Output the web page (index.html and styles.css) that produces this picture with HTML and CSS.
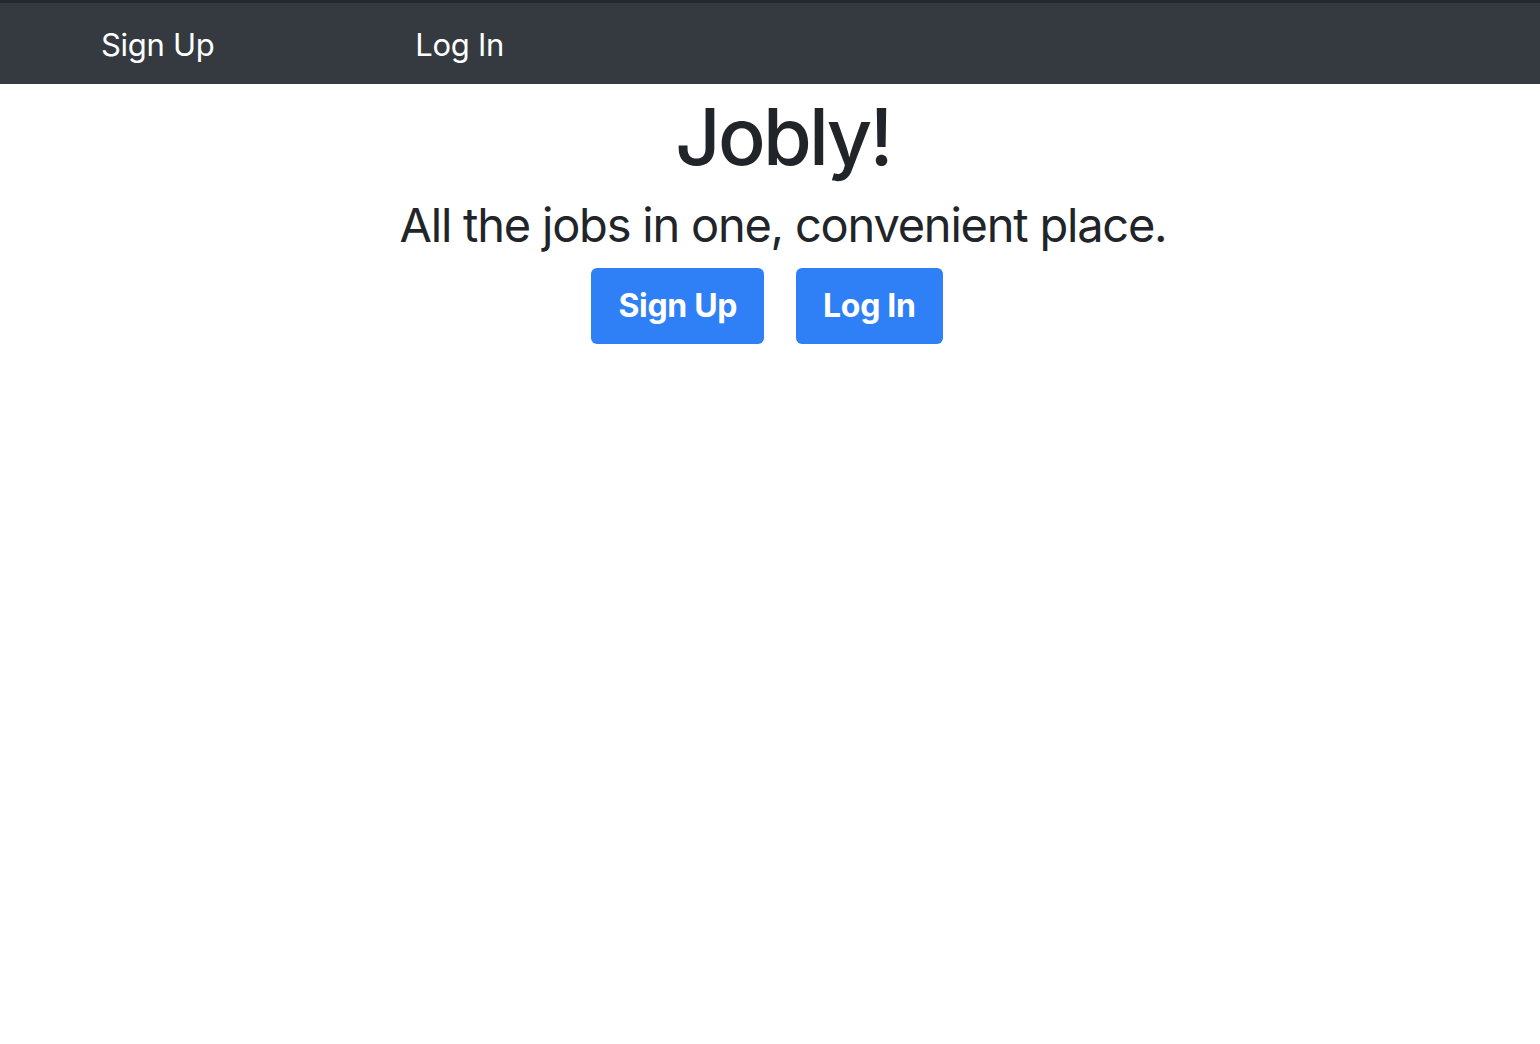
FILE: index.html
```html
<!DOCTYPE html>
<html lang="en">
<head>
<meta charset="utf-8">
<title>Jobly</title>
<link rel="stylesheet" href="styles.css">
</head>
<body>
<nav class="navbar">
  <a class="nav-link" href="#">Sign Up</a>
  <a class="nav-link" href="#">Log In</a>
</nav>
<main class="home">
  <h1 class="title">Jobly!</h1>
  <p class="lead">All the jobs in one, convenient place.</p>
  <div class="actions">
    <a class="btn" href="#">Sign Up</a>
    <a class="btn" href="#">Log In</a>
  </div>
</main>
</body>
</html>
```
FILE: styles.css
```css
html, body {
  margin: 0;
  padding: 0;
  background: #fff;
  font-family: Inter, "Noto Sans", sans-serif;
  color: #212529;
}
.navbar {
  display: flex;
  align-items: center;
  height: 81px;
  border-top: 3px solid #26282b;
  background: #343a40;
  padding-left: 101px;
  gap: 201px;
}
.nav-link {
  color: #fff;
  text-decoration: none;
  font-size: 31px;
  line-height: 1;
  padding-top: 1px;
  letter-spacing: -0.01em;
}
.home {
  display: flex;
  flex-direction: column;
  align-items: center;
  padding-left: 26px;
}
.title {
  margin: 5px 0 0;
  font-size: 79px;
  font-weight: 500;
  line-height: 1.2;
  letter-spacing: -0.035em;
}
.lead {
  margin: 13px 0 0;
  font-size: 47px;
  font-weight: 400;
  line-height: 1.2;
  letter-spacing: -0.026em;
}
.actions {
  display: flex;
  margin-top: 15px;
}
.btn {
  display: block;
  margin-right: 32px;
  height: 76px;
  line-height: 76px;
  padding: 0 27px;
  border-radius: 6px;
  background: #2f80f7;
  color: #fff;
  font-weight: 700;
  font-size: 32px;
  letter-spacing: -0.01em;
  text-decoration: none;
}
```
